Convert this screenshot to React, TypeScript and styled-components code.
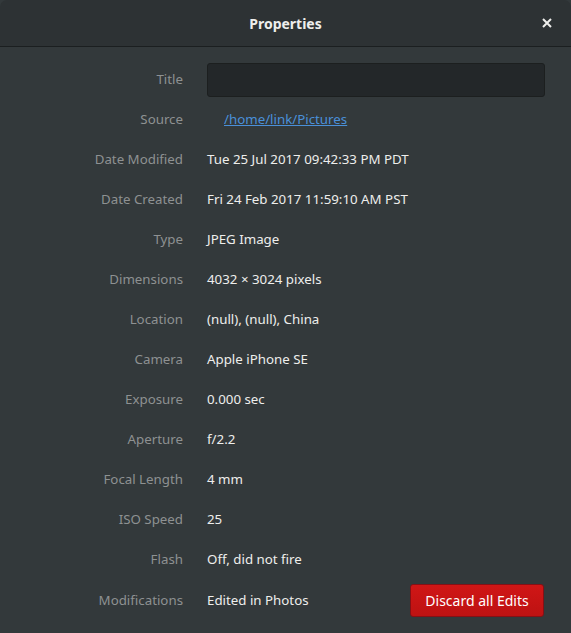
import { Fragment } from "react";
import styled, { createGlobalStyle } from "styled-components";

const GlobalStyle = createGlobalStyle`
  html, body {
    margin: 0;
    padding: 0;
    background: #33393b;
  }
  body {
    font-family: "Noto Sans", "DejaVu Sans", sans-serif;
    font-size: 13.3px;
    color: #eeeeec;
  }
`;

const Dialog = styled.div`
  width: 571px;
  height: 633px;
  background: #33393b;
  display: flex;
  flex-direction: column;
  overflow: hidden;
`;

const HeaderBar = styled.div`
  height: 46px;
  flex-shrink: 0;
  background: #2d3234;
  border-bottom: 1px solid #1b1f20;
  display: flex;
  align-items: center;
  justify-content: center;
  position: relative;
  border-radius: 7px 7px 0 0;
`;

const Title = styled.div`
  font-weight: bold;
  font-size: 14px;
  color: #eeeeec;
`;

const CloseButton = styled.button`
  position: absolute;
  right: 16px;
  top: 15px;
  width: 16px;
  height: 16px;
  padding: 0;
  border: none;
  background: none;
  display: flex;
  align-items: center;
  justify-content: center;
`;

const Grid = styled.div`
  display: grid;
  grid-template-columns: 183px 1fr;
  column-gap: 24px;
  padding: 12px 26px 0 0;
  grid-auto-rows: 40px;
`;

const Label = styled.div<{ $last?: boolean }>`
  color: #8e9192;
  display: flex;
  align-items: center;
  justify-content: flex-end;
  margin-top: ${(p) => (p.$last ? "2px" : "0")};
`;

const Value = styled.div<{ $indent?: boolean; $last?: boolean }>`
  display: flex;
  align-items: center;
  padding-left: ${(p) => (p.$indent ? "17px" : "0")};
  margin-top: ${(p) => (p.$last ? "2px" : "0")};
  min-width: 0;
`;

const Entry = styled.input`
  width: 100%;
  height: 34px;
  margin-top: 2px;
  box-sizing: border-box;
  background: #232729;
  border: 1px solid #1c1f1f;
  border-radius: 3px;
  color: #eeeeec;
  font: inherit;
  padding: 0 8px;
  outline: none;
`;

const Link = styled.a`
  color: #4a90d9;
  text-decoration: underline;
`;

const ModRow = styled.div`
  display: flex;
  align-items: center;
  justify-content: space-between;
  width: 100%;
`;

const DestructiveButton = styled.button`
  height: 33px;
  width: 134px;
  padding: 0;
  white-space: nowrap;
  background: linear-gradient(#d01616, #bd1212);
  border: 1px solid #851015;
  border-radius: 3px;
  color: #ffffff;
  font: inherit;
  font-size: 14px;
  margin-right: 1px;
`;

const rows: [string, string][] = [
  ["Date Modified", "Tue 25 Jul 2017 09:42:33 PM PDT"],
  ["Date Created", "Fri 24 Feb 2017 11:59:10 AM PST"],
  ["Type", "JPEG Image"],
  ["Dimensions", "4032 × 3024 pixels"],
  ["Location", "(null), (null), China"],
  ["Camera", "Apple iPhone SE"],
  ["Exposure", "0.000 sec"],
  ["Aperture", "f/2.2"],
  ["Focal Length", "4 mm"],
  ["ISO Speed", "25"],
  ["Flash", "Off, did not fire"],
];

export default function App() {
  return (
    <Dialog>
      <GlobalStyle />
      <HeaderBar>
        <Title>Properties</Title>
        <CloseButton aria-label="Close">
          <svg width="10" height="10" viewBox="0 0 10 10">
            <path d="M1 1L9 9M9 1L1 9" stroke="#eeeeec" strokeWidth="2" />
          </svg>
        </CloseButton>
      </HeaderBar>
      <Grid>
        <Label>Title</Label>
        <Value>
          <Entry />
        </Value>
        <Label>Source</Label>
        <Value $indent>
          <Link href="#">/home/link/Pictures</Link>
        </Value>
        {rows.map(([label, value]) => (
          <Fragment key={label}>
            <Label>{label}</Label>
            <Value>{value}</Value>
          </Fragment>
        ))}
        <Label $last>Modifications</Label>
        <Value $last>
          <ModRow>
            <span>Edited in Photos</span>
            <DestructiveButton>Discard all Edits</DestructiveButton>
          </ModRow>
        </Value>
      </Grid>
    </Dialog>
  );
}
